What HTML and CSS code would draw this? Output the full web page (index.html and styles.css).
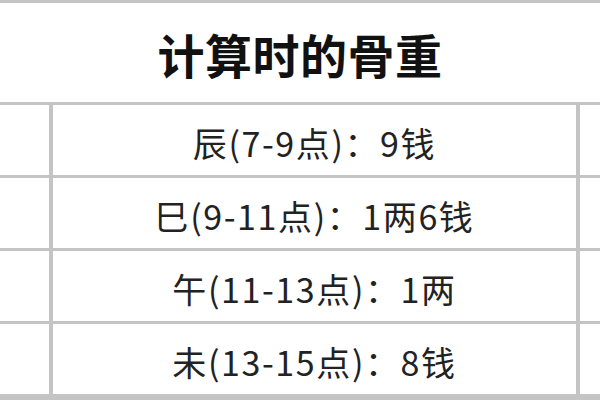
FILE: index.html
```html
<!DOCTYPE html>
<html lang="zh-CN">
<head>
<meta charset="utf-8">
<title>计算时的骨重</title>
<link rel="stylesheet" href="styles.css">
</head>
<body>
<div class="table">
  <div class="header">计算时的骨重</div>
  <div class="cell side"></div>
  <div class="cell main">辰(7-9点)：9钱</div>
  <div class="cell side"></div>
  <div class="cell side"></div>
  <div class="cell main">巳(9-11点)：1两6钱</div>
  <div class="cell side"></div>
  <div class="cell side"></div>
  <div class="cell main">午(11-13点)：1两</div>
  <div class="cell side"></div>
  <div class="cell side"></div>
  <div class="cell main">未(13-15点)：8钱</div>
  <div class="cell side"></div>
</div>
</body>
</html>
```

FILE: styles.css
```css
html, body {
  margin: 0;
  padding: 0;
  background: #ffffff;
}
.table {
  width: 600px;
  height: 400px;
  box-sizing: border-box;
  padding-top: 3px;
  background: #c4c4c4;
  display: grid;
  grid-template-columns: 49px 523px 20px;
  grid-template-rows: 99px 70px 70px 70px 70px;
  column-gap: 4px;
  row-gap: 3px;
  font-family: "Noto Sans CJK SC", "Noto Sans", sans-serif;
  color: #1c1c1c;
  overflow: hidden;
}
.header {
  grid-column: 1 / -1;
  background: #ffffff;
  display: flex;
  align-items: center;
  justify-content: center;
  font-size: 47px;
  font-weight: bold;
  color: #111111;
  letter-spacing: 0.5px;
  padding-top: 2px;
  box-sizing: border-box;
}
.cell {
  background: #ffffff;
}
.main {
  display: flex;
  align-items: center;
  justify-content: center;
  font-size: 34px;
  letter-spacing: 1.6px;
  color: #222222;
  padding-top: 4px;
  box-sizing: border-box;
}
```
